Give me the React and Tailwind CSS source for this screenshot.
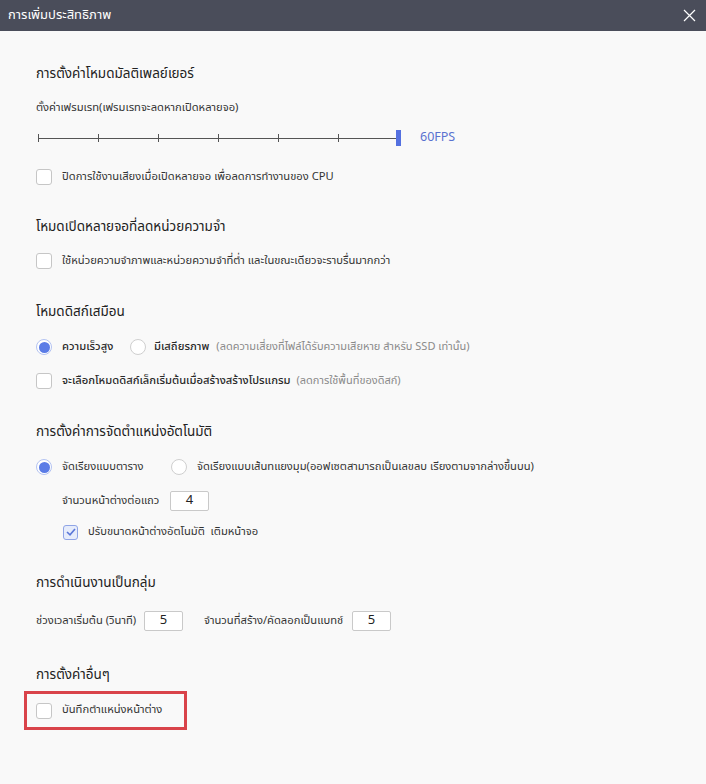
import React from "react";

const font = { fontFamily: '"Noto Sans Thai", "Noto Sans", "Liberation Sans", sans-serif' };

function Checkbox({ checked }) {
  if (checked) {
    return (
      <div className="w-[15px] h-[15px] rounded-[3px] border border-[#8fa4e6] bg-[#e6ecfb] flex items-center justify-center shrink-0">
        <svg width="10" height="8" viewBox="0 0 10 8">
          <path d="M1 4 L4 6.8 L9 1" fill="none" stroke="#5a77d8" strokeWidth="1.6" />
        </svg>
      </div>
    );
  }
  return <div className="w-4 h-4 rounded-[3px] border border-[#c6c6c6] bg-white shrink-0" />;
}

function Radio({ checked }) {
  if (checked) {
    return (
      <div className="w-4 h-4 rounded-full border border-[#b4c3f2] bg-white flex items-center justify-center shrink-0">
        <div className="w-[11px] h-[11px] rounded-full bg-[#5b7ce6]" />
      </div>
    );
  }
  return <div className="w-4 h-4 rounded-full border border-[#cfcfcf] bg-white shrink-0" />;
}

function NumBox({ value }) {
  return (
    <div className="w-[39px] h-5 border border-[#c9c9c9] bg-white rounded-[2px] flex items-center justify-center text-[13px] text-[#222] shrink-0">
      {value}
    </div>
  );
}

function Title({ children, className = "" }) {
  return <div className={`h-5 flex items-center text-[13.5px] text-[#222] ${className}`}>{children}</div>;
}

export default function App() {
  const ticks = [0, 60, 120, 180, 240, 300];
  return (
    <div className="w-[706px] h-[784px] bg-[#f9f9f9] overflow-hidden" style={font}>
      <div className="h-[31px] bg-[#4a4d5a] flex items-center justify-between pl-2 pr-[10px]">
        <span className="text-[13px] text-white">การเพิ่มประสิทธิภาพ</span>
        <svg width="13" height="13" viewBox="0 0 13 13">
          <path d="M1 1 L12 12 M12 1 L1 12" stroke="#ffffff" strokeWidth="1.2" />
        </svg>
      </div>

      <div className="pl-9 text-[11.2px] text-[#333]">
        <Title className="mt-[33px]">การตั้งค่าโหมดมัลติเพลย์เยอร์</Title>
        <div className="mt-[15px] h-[18px] flex items-center">ตั้งค่าเฟรมเรท(เฟรมเรทจะลดหากเปิดหลายจอ)</div>

        <div className="mt-[11px] h-5 flex items-center">
          <div className="relative w-[363px] h-5 ml-[2px]">
            <div className="absolute left-0 right-[4px] top-[10px] h-px bg-[#555]" />
            {ticks.map((t) => (
              <div key={t} className="absolute top-[6px] w-px h-[8px] bg-[#555]" style={{ left: t }} />
            ))}
            <div className="absolute right-0 top-[2px] w-[5px] h-4 bg-[#5470e0]" />
          </div>
          <span className="ml-[19px] text-[12.5px] text-[#5a72d0]">60FPS</span>
        </div>

        <div className="mt-[19px] h-5 flex items-center gap-[10px]">
          <Checkbox />
          <span>ปิดการใช้งานเสียงเมื่อเปิดหลายจอ เพื่อลดการทำงานของ CPU</span>
        </div>

        <Title className="mt-[30px]">โหมดเปิดหลายจอที่ลดหน่วยความจำ</Title>
        <div className="mt-[14px] h-5 flex items-center gap-[10px]">
          <Checkbox />
          <span>ใช้หน่วยความจำภาพและหน่วยความจำที่ต่ำ และในขณะเดียวจะราบรื่นมากกว่า</span>
        </div>

        <Title className="mt-[31px]">โหมดดิสก์เสมือน</Title>
        <div className="mt-[15px] h-5 flex items-center">
          <Radio checked />
          <span className="ml-[10px] w-[68px] shrink-0 font-medium text-[#2a2a2a]">ความเร็วสูง</span>
          <Radio />
          <span className="ml-[8px] font-medium text-[#2a2a2a]">มีเสถียรภาพ</span>
          <span className="ml-[7px] text-[11px] text-[#8a8a8a]">(ลดความเสี่ยงที่ไฟล์ได้รับความเสียหาย สำหรับ SSD เท่านั้น)</span>
        </div>
        <div className="mt-[14px] h-5 flex items-center">
          <Checkbox />
          <span className="ml-[10px] font-medium text-[#2a2a2a]">จะเลือกโหมดดิสก์เล็กเริ่มต้นเมื่อสร้างสร้างโปรแกรม</span>
          <span className="ml-[6px] text-[11px] text-[#8a8a8a]">(ลดการใช้พื้นที่ของดิสก์)</span>
        </div>

        <Title className="mt-[31px]">การตั้งค่าการจัดตำแหน่งอัตโนมัติ</Title>
        <div className="mt-[15px] h-5 flex items-center">
          <Radio checked />
          <span className="ml-[10px] w-[109px] shrink-0">จัดเรียงแบบตาราง</span>
          <Radio />
          <span className="ml-[10px]">จัดเรียงแบบเส้นทแยงมุม(ออฟเซตสามารถเป็นเลขลบ เรียงตามจากล่างขึ้นบน)</span>
        </div>
        <div className="mt-[14px] h-5 flex items-center pl-[26px]">
          <span className="w-[108px] shrink-0">จำนวนหน้าต่างต่อแถว</span>
          <NumBox value="4" />
        </div>
        <div className="mt-[11px] h-5 flex items-center pl-[27px] gap-[10px]">
          <Checkbox checked />
          <span>ปรับขนาดหน้าต่างอัตโนมัติ&nbsp;&nbsp;เติมหน้าจอ</span>
        </div>

        <Title className="mt-[31px]">การดำเนินงานเป็นกลุ่ม</Title>
        <div className="mt-[18px] h-5 flex items-center">
          <span className="w-[108px] shrink-0">ช่วงเวลาเริ่มต้น (วินาที)</span>
          <NumBox value="5" />
          <span className="ml-[21px] w-[148px] shrink-0">จำนวนที่สร้าง/คัดลอกเป็นแบทช์</span>
          <NumBox value="5" />
        </div>

        <Title className="mt-[34px]">การตั้งค่าอื่นๆ</Title>
      </div>

      <div className="ml-6 mt-[6px] w-[163px] h-[39px] border-[3px] border-[#d9434a] flex items-center pl-[9px] gap-[10px] text-[11.2px] text-[#333]">
        <Checkbox />
        <span>บันทึกตำแหน่งหน้าต่าง</span>
      </div>
    </div>
  );
}
